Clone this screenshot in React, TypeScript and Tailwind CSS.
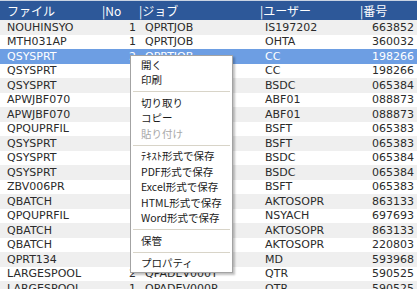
import React from "react";

type Row = { file: string; no: string; job: string; user: string; num: string };

// 4〜17行目の No とジョブはメニューに隠れているので空にしておく
const rows: Row[] = [
  { file: "NOUHINSYO", no: "1", job: "QPRTJOB", user: "IS197202", num: "663852" },
  { file: "MTH031AP", no: "1", job: "QPRTJOB", user: "OHTA", num: "360032" },
  { file: "QSYSPRT", no: "2", job: "QPRTJOB", user: "CC", num: "198266" },
  { file: "QSYSPRT", no: "", job: "", user: "CC", num: "198266" },
  { file: "QSYSPRT", no: "", job: "", user: "BSDC", num: "065384" },
  { file: "APWJBF070", no: "", job: "", user: "ABF01", num: "088873" },
  { file: "APWJBF070", no: "", job: "", user: "ABF01", num: "088873" },
  { file: "QPQUPRFIL", no: "", job: "", user: "BSFT", num: "065383" },
  { file: "QSYSPRT", no: "", job: "", user: "BSFT", num: "065383" },
  { file: "QSYSPRT", no: "", job: "", user: "BSDC", num: "065384" },
  { file: "QSYSPRT", no: "", job: "", user: "BSDC", num: "065384" },
  { file: "ZBV006PR", no: "", job: "", user: "BSFT", num: "065383" },
  { file: "QBATCH", no: "", job: "", user: "AKTOSOPR", num: "863133" },
  { file: "QPQUPRFIL", no: "", job: "", user: "NSYACH", num: "697693" },
  { file: "QBATCH", no: "", job: "", user: "AKTOSOPR", num: "863133" },
  { file: "QBATCH", no: "", job: "", user: "AKTOSOPR", num: "220803" },
  { file: "QPRT134", no: "", job: "", user: "MD", num: "593968" },
  { file: "LARGESPOOL", no: "2", job: "QPADEV000T", user: "QTR", num: "590525" },
  { file: "LARGESPOOL", no: "1", job: "QPADEV000P", user: "QTR", num: "590525" },
];

const SELECTED = 2;

type MenuEntry = { label: string; disabled?: boolean } | "sep";

const menu: MenuEntry[] = [
  { label: "開く" },
  { label: "印刷" },
  "sep",
  { label: "切り取り" },
  { label: "コピー" },
  { label: "貼り付け", disabled: true },
  "sep",
  { label: "ﾃｷｽﾄ形式で保存" },
  { label: "PDF形式で保存" },
  { label: "Excel形式で保存" },
  { label: "HTML形式で保存" },
  { label: "Word形式で保存" },
  "sep",
  { label: "保管" },
  "sep",
  { label: "プロパティ" },
];

const jpFont = { fontFamily: '"Noto Sans CJK JP", "DejaVu Sans", sans-serif' };

export default function App() {
  return (
    <div className="relative h-[289px] w-[417px] overflow-hidden bg-white">
      {/* 見出し */}
      <div
        className="flex h-[20px] items-center border-t border-[#c9d3e2] bg-[#2d5899] text-[12px] leading-none text-white"
        style={jpFont}
      >
        <div className="w-[100px] pl-[7px]">ファイル</div>
        <div className="w-[37px] pl-[2px]">|No</div>
        <div className="w-[121px] pl-[2px]">|ジョブ</div>
        <div className="w-[100px] pl-[2px]">|ユーザー</div>
        <div className="flex-1 pl-[2px]">|番号</div>
      </div>

      {/* 行 */}
      <div
        className="text-[11px] leading-none text-[#2b2b2b]"
        style={{ fontFamily: '"DejaVu Sans", Verdana, sans-serif' }}
      >
        {rows.map((r, i) => {
          const sel = i === SELECTED;
          const bg = sel ? "bg-[#6d9ee3] text-white" : i % 2 === 0 ? "bg-[#efefef]" : "bg-white";
          return (
            <div key={i} className={`flex h-[14.5px] items-center whitespace-nowrap ${bg}`}>
              <div className="w-[100px] pl-[7px]">{r.file}</div>
              <div className="w-[36px] text-right">{r.no}</div>
              <div className="w-[122px] pl-[9px]">{r.job}</div>
              <div className="w-[100px] pl-[7px]">{r.user}</div>
              <div className="flex-1 pr-[3px] text-right">{r.num}</div>
            </div>
          );
        })}
      </div>

      {/* コンテキストメニュー */}
      <div
        className="absolute left-[130px] top-[55px] w-[103px] border border-[#a3a3a3] bg-white py-[1px] text-[10.5px] leading-none text-[#1a1a1a] shadow-[2px_2px_2px_rgba(0,0,0,0.25)]"
        style={jpFont}
      >
        {menu.map((m, i) =>
          m === "sep" ? (
            <div key={i} className="mx-[2px] my-[3px] h-px bg-[#d8d4c8]" />
          ) : (
            <div
              key={i}
              className={`flex h-[15.5px] items-center pl-[10px] ${m.disabled ? "text-[#a8a8a8]" : ""}`}
            >
              {m.label}
            </div>
          ),
        )}
      </div>
    </div>
  );
}
